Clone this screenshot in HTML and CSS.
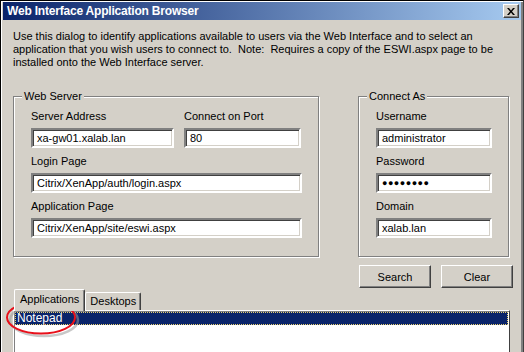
FILE: index.html
```html
<!DOCTYPE html>
<html lang="en">
<head>
    <meta charset="UTF-8">
    <title>Web Interface Application Browser</title>
    <link rel="stylesheet" href="styles.css">
</head>
<body>
    <div class="window">
        <div class="title-bar">
            <span class="title">Web Interface Application Browser</span>
            <span class="close-button">
                <svg width="8" height="7" viewBox="0 0 8 7"><path d="M0 0h2l2 2.5 2-2.5h2l-3 3.5 3 3.5h-2l-2-2.5-2 2.5h-2l3-3.5z" fill="#000"/></svg>
            </span>
        </div>
        <div class="content">
            <p class="intro">Use this dialog to identify applications available to users via the Web Interface and to select an<br>application that you wish users to connect to.&nbsp; Note:&nbsp; Requires a copy of the ESWI.aspx page to be<br>installed onto the Web Interface server.</p>

            <div class="groups">
                <fieldset class="group web-server">
                    <legend>Web Server</legend>
                    <div class="row split">
                        <div class="field">
                            <label>Server Address</label>
                            <div class="textbox">xa-gw01.xalab.lan</div>
                        </div>
                        <div class="field">
                            <label>Connect on Port</label>
                            <div class="textbox">80</div>
                        </div>
                    </div>
                    <div class="field">
                        <label>Login Page</label>
                        <div class="textbox">Citrix/XenApp/auth/login.aspx</div>
                    </div>
                    <div class="field">
                        <label>Application Page</label>
                        <div class="textbox">Citrix/XenApp/site/eswi.aspx</div>
                    </div>
                </fieldset>

                <fieldset class="group connect-as">
                    <legend>Connect As</legend>
                    <div class="field">
                        <label>Username</label>
                        <div class="textbox">administrator</div>
                    </div>
                    <div class="field">
                        <label>Password</label>
                        <div class="textbox password">&#9679;&#9679;&#9679;&#9679;&#9679;&#9679;&#9679;&#9679;</div>
                    </div>
                    <div class="field">
                        <label>Domain</label>
                        <div class="textbox">xalab.lan</div>
                    </div>
                </fieldset>
            </div>

            <div class="buttons">
                <button class="btn">Search</button>
                <button class="btn">Clear</button>
            </div>

            <div class="tabs">
                <div class="tab active">Applications</div>
                <div class="tab">Desktops</div>
            </div>
            <div class="listbox">
                <div class="list-item selected">Notepad</div>
            </div>
        </div>
        <svg class="callout" width="80" height="42" viewBox="0 0 80 42">
            <ellipse cx="39" cy="20" rx="34" ry="16" fill="none" stroke="#9a9a9a" stroke-width="2.5" opacity="0.55"/>
            <ellipse cx="36" cy="17.5" rx="34" ry="16" fill="none" stroke="#e8101a" stroke-width="2"/>
        </svg>
    </div>
</body>
</html>
```

FILE: styles.css
```css
body {
    margin: 0;
    padding: 0;
    background-color: #d4d0c8;
    font-family: "Liberation Sans", Arial, sans-serif;
    font-size: 11px;
    color: #000;
}

.window {
    position: relative;
    width: 524px;
    height: 352px;
    box-sizing: border-box;
    border-left: 1px solid #000;
    border-top: 1px solid #000;
    border-right: 1px solid #404040;
    padding: 1px 0 0 2px;
    overflow: hidden;
    background-color: #d4d0c8;
    box-shadow: inset 1px 1px #fff, inset -2px 0 #808080;
}

.title-bar {
    display: flex;
    align-items: center;
    justify-content: space-between;
    height: 18px;
    margin-right: 2px;
    padding: 0 2px 0 4px;
    background: linear-gradient(to right, #0a246a, #a6caf0);
}

.title {
    color: #fff;
    font-weight: bold;
    font-size: 12px;
    letter-spacing: -0.2px;
}

.close-button {
    display: flex;
    align-items: center;
    justify-content: center;
    width: 16px;
    height: 14px;
    box-sizing: border-box;
    background-color: #d4d0c8;
    border: 1px solid;
    border-color: #fff #404040 #404040 #fff;
    box-shadow: inset -1px -1px #808080;
}

.content {
    padding: 0 0 0 10px;
}

.intro {
    margin: 10px 0 0 0;
    line-height: 13px;
}

.groups {
    display: flex;
    gap: 39px;
    margin-top: 21px;
}

.group {
    margin: 0;
    padding: 1px 16px 0 17px;
    border: 1px solid #808080;
    box-shadow: inset 1px 1px #fff, 1px 1px #fff;
    height: 167px;
    box-sizing: border-box;
}

.web-server {
    width: 306px;
}

.connect-as {
    width: 151px;
}

.group legend {
    padding: 0 2px;
    margin-left: -9px;
    background-color: #d4d0c8;
    line-height: 12px;
}

.field {
    display: flex;
    flex-direction: column;
}

.field label {
    height: 14px;
    line-height: 14px;
    margin: 6px 0 5px 0;
}

.row.split {
    display: flex;
    gap: 10px;
}

.row.split .field:first-child {
    width: 143px;
}

.row.split .field:last-child {
    width: 117px;
}

.textbox {
    height: 20px;
    box-sizing: border-box;
    padding: 0 4px;
    line-height: 16px;
    background-color: #fff;
    border: 2px solid;
    border-color: #808080 #fff #fff #808080;
    box-shadow: inset 1px 1px #404040, inset -1px -1px #d4d0c8;
    white-space: nowrap;
}

.textbox.password {
    font-size: 9px;
    letter-spacing: 0.5px;
}

.buttons {
    display: flex;
    justify-content: flex-end;
    gap: 10px;
    margin: 8px 10px 0 0;
}

.btn {
    width: 72px;
    height: 23px;
    font-family: "Liberation Sans", Arial, sans-serif;
    font-size: 11px;
    background-color: #d4d0c8;
    border: 1px solid;
    border-color: #fff #404040 #404040 #fff;
    box-shadow: inset -1px -1px #808080, inset 1px 1px #d4d0c8;
    padding: 0;
}

.tabs {
    display: flex;
    align-items: flex-end;
    height: 22px;
    margin-top: 0;
    padding-left: 1px;
}

.tab {
    height: 17px;
    padding: 0 4px;
    line-height: 17px;
    border: 1px solid;
    border-bottom: none;
    border-color: #fff #404040 #404040 #fff;
    border-radius: 2px 2px 0 0;
    box-shadow: inset -1px 0 #808080;
    font-size: 11px;
}

.tab.active {
    height: 21px;
    padding: 0 5px;
    line-height: 19px;
    position: relative;
    z-index: 1;
    margin-bottom: -1px;
    background-color: #d4d0c8;
}

.listbox {
    width: 497px;
    height: 60px;
    box-sizing: border-box;
    padding: 1px 1px;
    background-color: #fff;
    border-left: 1px solid #fff;
    border-top: 1px solid #fff;
    border-right: 1px solid #404040;
    box-shadow: inset 1px 1px #808080;
}

.list-item {
    height: 13px;
    line-height: 13px;
    padding-left: 2px;
    font-size: 12px;
}

.list-item.selected {
    background-color: #0a246a;
    color: #fff;
    outline: 1px dotted #e8d070;
    outline-offset: -1px;
}

.callout {
    position: absolute;
    left: 4px;
    top: 299px;
}
```
